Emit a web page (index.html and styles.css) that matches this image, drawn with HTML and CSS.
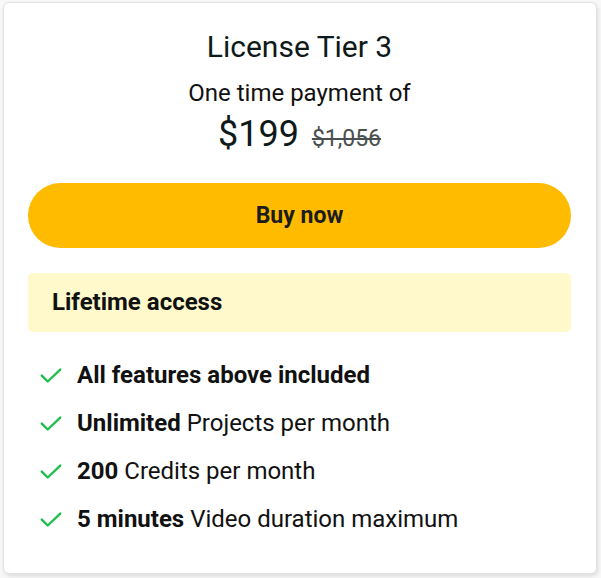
FILE: index.html
```html
<!DOCTYPE html>
<html>
<head>
<meta charset="utf-8">
<link rel="stylesheet" href="styles.css">
</head>
<body>
<div class="card">
  <h2 class="title">License Tier 3</h2>
  <p class="sub">One time payment of</p>
  <div class="price"><span class="now">$199</span><span class="was">$1,056</span></div>
  <button class="buy">Buy now</button>
  <div class="access">Lifetime access</div>
  <ul class="features">
    <li><svg class="check" viewBox="0 0 24 24"><path d="M3.5 12.5l5.5 5.5L20.5 7" fill="none" stroke="#1fbf4f" stroke-width="2.2" stroke-linecap="round" stroke-linejoin="round"/></svg><span><b>All features above included</b></span></li>
    <li><svg class="check" viewBox="0 0 24 24"><path d="M3.5 12.5l5.5 5.5L20.5 7" fill="none" stroke="#1fbf4f" stroke-width="2.2" stroke-linecap="round" stroke-linejoin="round"/></svg><span><b>Unlimited</b> Projects per month</span></li>
    <li><svg class="check" viewBox="0 0 24 24"><path d="M3.5 12.5l5.5 5.5L20.5 7" fill="none" stroke="#1fbf4f" stroke-width="2.2" stroke-linecap="round" stroke-linejoin="round"/></svg><span><b>200</b> Credits per month</span></li>
    <li><svg class="check" viewBox="0 0 24 24"><path d="M3.5 12.5l5.5 5.5L20.5 7" fill="none" stroke="#1fbf4f" stroke-width="2.2" stroke-linecap="round" stroke-linejoin="round"/></svg><span><b>5 minutes</b> Video duration maximum</span></li>
  </ul>
</div>
</body>
</html>
```

FILE: styles.css
```css
html, body {
  margin: 0;
  background: #f8f8f8;
}
body {
  padding: 2px 4px 4px 3px;
  font-family: Roboto, "Liberation Sans", sans-serif;
  color: #111;
}
.card {
  background: #fff;
  border: 1px solid #e2e2e2;
  border-radius: 6px;
  box-shadow: 1px 2px 4px rgba(0,0,0,0.12);
  padding: 26px 25px 40px 24px;
  display: flex;
  flex-direction: column;
  align-items: center;
  height: 572px;
  box-sizing: border-box;
}
.title {
  margin: 0;
  font-size: 30px;
  font-weight: 400;
  line-height: 36px;
  color: #0e1a1a;
}
.sub {
  margin: 14px 0 0;
  font-size: 24px;
  font-weight: 400;
  line-height: 28px;
  color: #111;
}
.price {
  margin-top: 5px;
  display: flex;
  align-items: baseline;
  gap: 13px;
}
.now {
  font-size: 36px;
  line-height: 44px;
  color: #0e1a1a;
}
.was {
  font-size: 23px;
  font-weight: 400;
  color: #4a5050;
  text-decoration: line-through;
  text-decoration-thickness: 2px;
}
.buy {
  margin-top: 27px;
  width: 100%;
  height: 65px;
  border: none;
  border-radius: 33px;
  background: #ffbb00;
  font-family: inherit;
  font-size: 23px;
  font-weight: 700;
  color: #1c1c1c;
  cursor: pointer;
}
.access {
  margin-top: 25px;
  width: 100%;
  box-sizing: border-box;
  background: #fff9cc;
  border-radius: 5px;
  padding: 15px 24px;
  font-size: 24px;
  font-weight: 700;
  line-height: 29px;
}
.features {
  list-style: none;
  margin: 29px 0 0;
  padding: 0 0 0 10px;
  width: 100%;
  box-sizing: border-box;
  display: flex;
  flex-direction: column;
  gap: 20px;
}
.features li {
  display: flex;
  align-items: center;
  gap: 13px;
  font-size: 24px;
  line-height: 28px;
  font-weight: 400;
}
.features b {
  font-weight: 700;
}
.check {
  width: 26px;
  height: 26px;
  flex: none;
}
```
